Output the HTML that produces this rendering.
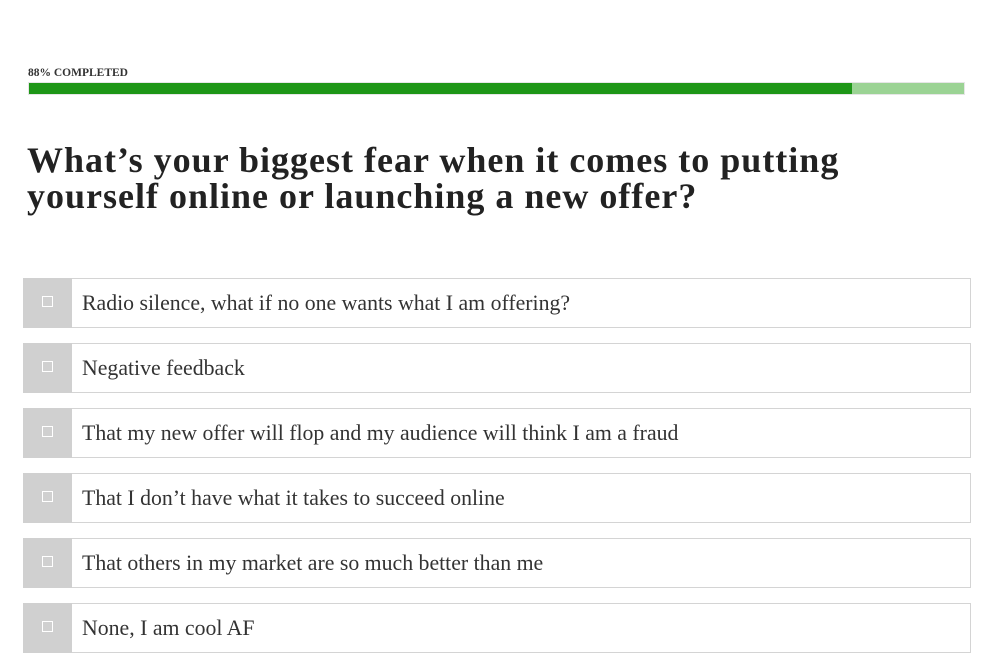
<!DOCTYPE html>
<html><head><style>
body{margin:0;background:#fff;width:996px;height:672px;overflow:hidden;font-family:"Liberation Serif",serif;color:#222}
.lbl{position:absolute;left:28px;top:67px;font-size:11.5px;font-weight:bold;color:#333}
.bar{position:absolute;left:28px;top:82px;width:937px;height:13px;background:#9bd394;border:1px solid #e6e6e6;box-sizing:border-box}
.fill{position:absolute;left:0;top:0;height:100%;width:823px;background:#1e9617}
h1{position:absolute;left:27px;top:142px;margin:0;font-size:36px;line-height:36px;font-weight:bold;color:#222;width:900px;letter-spacing:1px}
.opt{position:absolute;left:23px;width:948px;height:50px;border:1px solid #d4d4d4;box-sizing:border-box;background:#fff}
.opt .b{position:absolute;left:-1px;top:-1px;width:49px;height:50px;background:#d0d0d0}
.opt .b i{position:absolute;left:19px;top:18px;width:11px;height:11px;border:1px solid #fff;box-sizing:border-box}
.opt span{position:absolute;left:58px;top:12px;font-size:21.8px;color:#333}
</style></head><body>
<div class="lbl">88% COMPLETED</div>
<div class="bar"><div class="fill"></div></div>
<h1>What’s your biggest fear when it comes to putting<br>yourself online or launching a new offer?</h1>
<div class="opt" style="top:278px"><div class="b"><i></i></div><span>Radio silence, what if no one wants what I am offering?</span></div>
<div class="opt" style="top:343px"><div class="b"><i></i></div><span>Negative feedback</span></div>
<div class="opt" style="top:408px"><div class="b"><i></i></div><span>That my new offer will flop and my audience will think I am a fraud</span></div>
<div class="opt" style="top:473px"><div class="b"><i></i></div><span>That I don’t have what it takes to succeed online</span></div>
<div class="opt" style="top:538px"><div class="b"><i></i></div><span>That others in my market are so much better than me</span></div>
<div class="opt" style="top:603px"><div class="b"><i></i></div><span>None, I am cool AF</span></div>
</body></html>
